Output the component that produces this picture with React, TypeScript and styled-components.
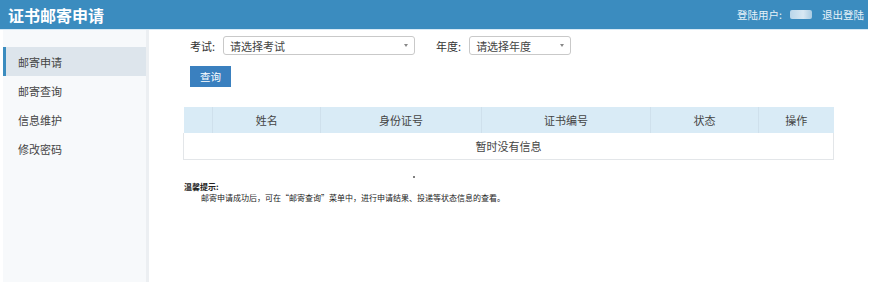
import styled, { createGlobalStyle } from "styled-components";

const GlobalStyle = createGlobalStyle`
  html, body {
    margin: 0;
    padding: 0;
    background: #ffffff;
    font-family: "Noto Sans CJK SC", "Noto Sans", sans-serif;
    color: #333;
  }
`;

const Page = styled.div`
  width: 884px;
  height: 282px;
  display: flex;
  flex-direction: column;
  overflow: hidden;
`;

const TopBar = styled.header`
  width: 868px;
  height: 30px;
  background: #3b8cbf;
  border-bottom: 1px solid #d6e9f5;
  display: flex;
  align-items: center;
  justify-content: space-between;
  padding: 0 4px 0 8px;
  box-sizing: border-box;
  color: #fff;
`;

const Brand = styled.h1`
  margin: 0;
  font-size: 16px;
  font-weight: 700;
`;

const UserArea = styled.div`
  display: flex;
  align-items: center;
  font-size: 10.5px;
  color: #e8f2f9;
`;

const Blurred = styled.span`
  width: 22px;
  height: 9px;
  margin: 0 10px 0 8px;
  background: linear-gradient(90deg, #b9d6ea, #d8e8f3 60%, #a9cbe2);
  border-radius: 2px;
`;

const Body = styled.div`
  flex: 1;
  display: flex;
`;

const Sidebar = styled.nav`
  width: 143px;
  margin-left: 3px;
  background: #f7f9fb;
  border-right: 3px solid #eceff2;
  padding-top: 17px;
  display: flex;
  flex-direction: column;
`;

const NavItem = styled.div<{ $active?: boolean }>`
  height: 29px;
  display: flex;
  align-items: center;
  padding-left: ${(p) => (p.$active ? "12px" : "15px")};
  font-size: 11px;
  color: #444;
  background: ${(p) => (p.$active ? "#dde5ec" : "transparent")};
  border-left: ${(p) => (p.$active ? "3px solid #3b8cbf" : "none")};
`;

const Main = styled.main`
  flex: 1;
  padding: 6px 0 0 21px;
  display: flex;
  flex-direction: column;
`;

const FilterRow = styled.div`
  display: flex;
  align-items: center;
  margin-left: 20px;
  font-size: 11px;
  color: #333;
`;

const Label = styled.span`
  margin-right: 8px;
`;

const Select = styled.div<{ $width: number }>`
  width: ${(p) => p.$width}px;
  height: 19px;
  box-sizing: border-box;
  border: 1px solid #c9c9c9;
  border-radius: 3px;
  display: flex;
  align-items: center;
  justify-content: space-between;
  padding: 0 6px;
  margin-right: 21px;
  color: #444;
  font-size: 11px;
  &::after {
    content: "";
    border-left: 2.5px solid transparent;
    border-right: 2.5px solid transparent;
    border-top: 3px solid #888;
  }
`;

const Button = styled.button`
  align-self: flex-start;
  margin: 11px 0 0 20px;
  width: 41px;
  height: 21px;
  border: none;
  background: #3a80bf;
  color: #fff;
  font-family: inherit;
  font-size: 10.5px;
  padding: 0;
`;

const Table = styled.table`
  margin: 20px 0 0 13px;
  width: 651px;
  border-collapse: collapse;
  font-size: 11px;
  color: #444;
  th {
    background: #d9ebf6;
    font-weight: 400;
    height: 26px;
    border-left: 1px solid #cfe0ec;
    padding: 0;
  }
  th:first-child {
    border-left: none;
  }
  td {
    height: 24px;
    text-align: center;
    border: 1px solid #e3e6e9;
    border-top: none;
  }
`;

const Dot = styled.span`
  align-self: flex-start;
  margin: 16px 0 0 243px;
  width: 2px;
  height: 2px;
  background: #555;
  border-radius: 50%;
`;

const Tips = styled.div`
  margin: 3px 0 0 14px;
  font-size: 8px;
  color: #222;
  line-height: 11px;
`;

const TipTitle = styled.div`
  font-weight: 700;
`;

const TipText = styled.div`
  padding-left: 17px;
`;

const columns = [
  { name: "", width: 29 },
  { name: "姓名", width: 108 },
  { name: "身份证号", width: 161 },
  { name: "证书编号", width: 170 },
  { name: "状态", width: 108 },
  { name: "操作", width: 75 },
];

export default function App() {
  return (
    <Page>
      <GlobalStyle />
      <TopBar>
        <Brand>证书邮寄申请</Brand>
        <UserArea>
          <span>登陆用户:</span>
          <Blurred />
          <span>退出登陆</span>
        </UserArea>
      </TopBar>
      <Body>
        <Sidebar>
          <NavItem $active>邮寄申请</NavItem>
          <NavItem>邮寄查询</NavItem>
          <NavItem>信息维护</NavItem>
          <NavItem>修改密码</NavItem>
        </Sidebar>
        <Main>
          <FilterRow>
            <Label>考试:</Label>
            <Select $width={192}>请选择考试</Select>
            <Label>年度:</Label>
            <Select $width={102}>请选择年度</Select>
          </FilterRow>
          <Button>查询</Button>
          <Table>
            <thead>
              <tr>
                {columns.map((c, i) => (
                  <th key={i} style={{ width: c.width }}>
                    {c.name}
                  </th>
                ))}
              </tr>
            </thead>
            <tbody>
              <tr>
                <td colSpan={columns.length}>暂时没有信息</td>
              </tr>
            </tbody>
          </Table>
          <Dot />
          <Tips>
            <TipTitle>温馨提示:</TipTitle>
            <TipText>
              邮寄申请成功后，可在“邮寄查询”菜单中，进行申请结果、投递等状态信息的查看。
            </TipText>
          </Tips>
        </Main>
      </Body>
    </Page>
  );
}
